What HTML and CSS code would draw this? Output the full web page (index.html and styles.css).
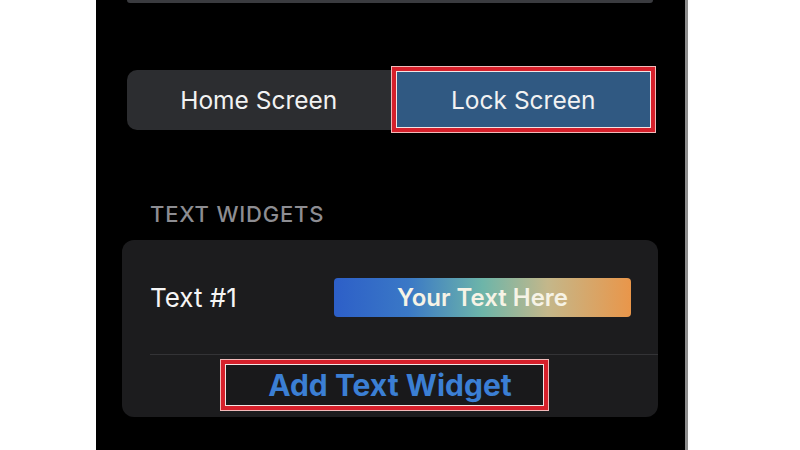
FILE: index.html
```html
<!DOCTYPE html>
<html lang="en">
<head>
    <meta charset="UTF-8">
    <meta name="viewport" content="width=device-width, initial-scale=1.0">
    <title>Widgets - Lock Screen</title>
    <link rel="stylesheet" href="styles.css">
</head>
<body>
    <div class="phone">
        <div class="top-card"></div>

        <div class="segmented">
            <div class="segment">Home Screen</div>
            <div class="segment segment-active highlight">Lock Screen</div>
        </div>

        <div class="section-label">TEXT WIDGETS</div>

        <div class="widget-card">
            <div class="widget-row">
                <span class="widget-name">Text #1</span>
                <div class="widget-preview">Your Text Here</div>
            </div>
            <div class="add-row">
                <div class="add-button highlight">Add Text Widget</div>
            </div>
        </div>
    </div>
</body>
</html>
```

FILE: styles.css
```css
body {
    margin: 0;
    background: #fff;
    font-family: 'Inter', 'Liberation Sans', sans-serif;
}
.phone {
    width: 589px;
    height: 450px;
    margin-left: 96px;
    background: #000;
    border-right: 3px solid #8c8c8c;
    overflow: hidden;
}
.top-card {
    height: 3px;
    margin: 0 32px 0 31px;
    background: #3a3b3f;
    border-radius: 0 0 10px 10px;
}
.segmented {
    display: flex;
    height: 60px;
    margin: 67px 29px 0 31px;
    background: #2c2d30;
    border-radius: 10px;
}
.segment {
    flex: 1;
    display: flex;
    align-items: center;
    justify-content: center;
    color: #f2f2f2;
    font-size: 24.5px;
}
.segment-active {
    margin: -4px 0 -3px 0;
    background: #305982;
}
.highlight {
    border: 1px solid #f2b9b9;
    box-shadow: inset 0 0 0 4px #d6202b, inset 0 0 0 5px #f4e4e4;
}
.section-label {
    margin: 70px 0 0 54px;
    color: #8d8d92;
    font-size: 22px;
    font-weight: 500;
    letter-spacing: 0.8px;
    line-height: 28px;
}
.widget-card {
    margin: 12px 27px 0 26px;
    background: #1c1c1e;
    border-radius: 12px;
}
.widget-row {
    display: flex;
    align-items: center;
    height: 114px;
    padding: 0 27px 0 28px;
}
.widget-name {
    color: #f5f5f5;
    font-size: 26px;
}
.widget-preview {
    margin-left: auto;
    width: 297px;
    height: 39px;
    display: flex;
    align-items: center;
    justify-content: center;
    border-radius: 4px;
    background: linear-gradient(90deg, #2d5fc8 0%, #3a78c6 25%, #6db5a9 50%, #c4b78a 72%, #e9964a 100%);
    color: #f6f3e6;
    font-size: 24px;
    font-weight: 600;
}
.add-row {
    height: 63px;
    margin-left: 28px;
    border-top: 1px solid #333336;
    box-sizing: border-box;
    padding-top: 4px;
}
.add-button {
    width: 329px;
    height: 52px;
    margin-left: 70px;
    box-sizing: border-box;
    display: flex;
    align-items: center;
    justify-content: center;
    padding-left: 11px;
    background: #19191b;
    color: #3b7fd4;
    font-size: 30px;
    font-weight: 700;
}
```
